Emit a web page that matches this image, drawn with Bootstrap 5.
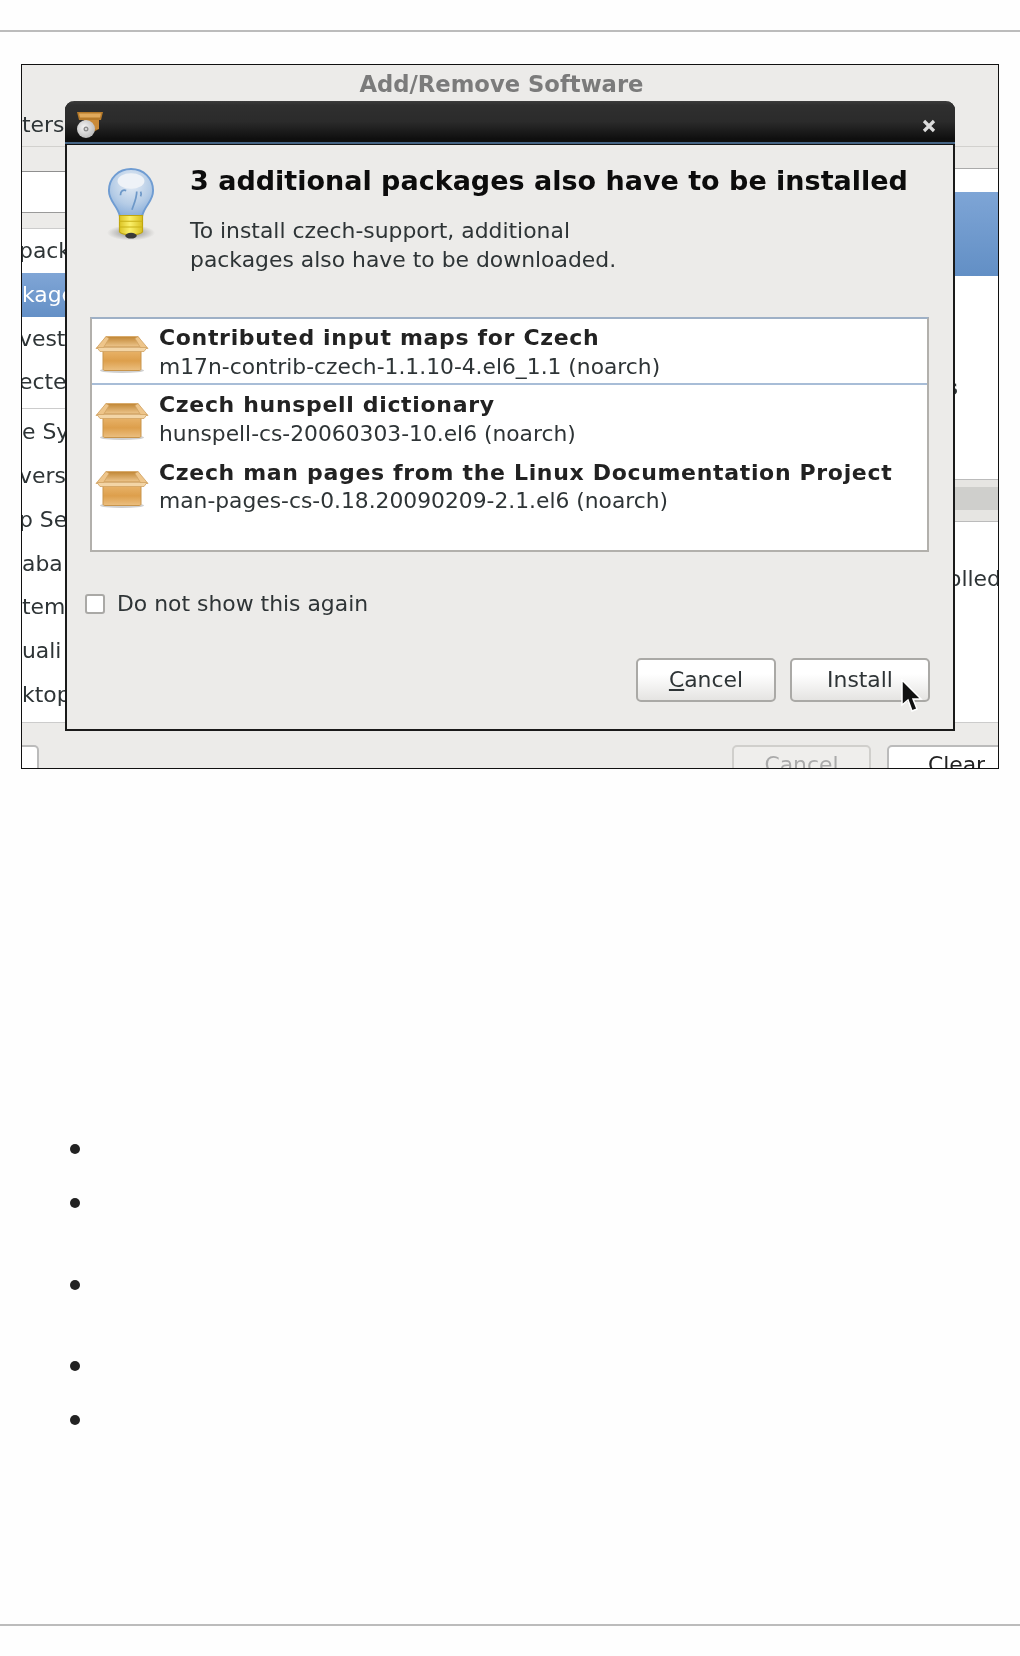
<!DOCTYPE html>
<html lang="en">
<head>
  <meta charset="UTF-8" />
  <meta name="viewport" content="width=device-width, initial-scale=1" />
  <title>Add/Remove Software</title>
  <link href="https://cdn.jsdelivr.net/npm/bootstrap@5.3.0/dist/css/bootstrap.min.css" rel="stylesheet" />
  <style>
    body { background: #fefefe; color: #2e3436; font-family: "DejaVu Sans", sans-serif; font-size: 21.9px; }
    .page-rule { height: 2px; background: #bcbcbc; opacity: 1; border: 0; margin: 0; }
    .top-rule { margin-top: 30px; }
    .bottom-rule { margin-top: 199px; }

    /* screenshot frame */
    .shot { margin: 32px 0 0 21px; width: 978px; height: 705px; border: 1px solid #111; background: #ecebe9; filter: blur(.5px); overflow: hidden; }
    .win-title { height: 39px; padding-right: 17px; font-size: 22.7px; font-weight: 700; color: #7b7b7b; }
    .win-tools { height: 43px; border-bottom: 1px solid #d2d1ce; }
    .win-main { height: 575px; }
    .side-col { width: 500px; flex: none; }
    .fill-col { width: 476px; flex: none; }
    .gap-a { height: 25px; border-bottom: 1px solid #8f8f8f; }
    .white-a { height: 40px; background: #fff; }
    .gap-b { height: 16px; border-top: 1px solid #9a9a9a; }
    .side-list { background: #fff; border-top: 1px solid #ccc; height: 494px; }
    .side-row { height: 43.8px; line-height: 43.8px; white-space: nowrap; }
    .side-row.on { background: linear-gradient(#80a6d6, #6490c6); color: #fff; }
    .side-row.cut { text-indent: -3px; }
    .side-sep { height: 5px; border-bottom: 1px solid #ccc; margin-bottom: 1px; }
    .pane-gap { height: 22px; border-bottom: 1px solid #aaa; }
    .pane-white { height: 23px; background: #fff; }
    .pane-blue { height: 84px; background: linear-gradient(#7ea5d6, #628fc5); }
    .pane-upper { height: 203px; background: #fff; padding-top: 99px; }
    .peek { padding-left: 426px; line-height: 26px; white-space: nowrap; }
    .peek-bold { padding-left: 423px; font-weight: 700; }
    .pane-bar { height: 43px; padding: 7px 0 11px; background: #e6e5e2; border-top: 1px solid #bbb; border-bottom: 1px solid #bbb; }
    .pane-fill { height: 100%; background: #cfcfcc; }
    .pane-lower { height: 200px; background: #fff; padding-top: 44px; }
    .win-foot { height: 46px; border-top: 1px solid #ccc; padding-top: 22px; }
    .foot-btn { flex: none; height: 40px; border: 2px solid #bbb; border-radius: 5px; background: #fff; line-height: 36px; text-align: center; }
    .foot-stub { width: 17px; border-left: 0; border-radius: 0 5px 0 0; }
    .foot-off { width: 139px; margin-left: 693px; color: #aaa; background: #efeeec; border-color: #d0cfcc; }
    .foot-clear { width: 139px; margin-left: 16px; color: #222; }

    /* dialog over the window */
    .dlg { position: absolute; left: 43px; top: 36px; width: 890px; height: 630px; background: #ecebe9; border: 2px solid #1a1a1a; border-top: 0; border-radius: 9px 9px 0 0; }
    .dlg-bar { height: 43px; margin: 0 -2px; padding: 10px 19px 0 11px; border-radius: 9px 9px 0 0; background: linear-gradient(#3c3c3c 0, #2f2f2f 10%, #2b2b2b 50%, #0f0f0f 92%); border-bottom: 2px solid #466484; box-shadow: 0 1px 0 #111; }
    .dlg-top { height: 173px; padding: 19px 0 0 40px; }
    .bulb { width: 48px; height: 74px; margin: 4px 35px 0 0; flex: none; }
    .dlg-head { font-size: 27px; font-weight: 700; color: #0c0c0c; line-height: 36px; margin-bottom: 17px; white-space: nowrap; }
    .dlg-copy { line-height: 29px; margin: 0; }
    .pkg-list { margin-left: 23px; width: 839px; height: 235px; background: #fff; border: 2px solid #b2b0ac; border-top-color: #9eb0c6; }
    .pkg-row { height: 67.5px; padding: 6px 0 0 3px; }
    .pkg-row.first { height: 66px; padding-top: 5px; border-bottom: 2px solid #a8bdd7; }
    .pkg-icon { width: 54px; height: 38px; margin: 11px 10px 0 0; flex: none; }
    .pkg-name { font-size: 22px; font-weight: 700; letter-spacing: .67px; line-height: 28.5px; color: #222; white-space: nowrap; }
    .pkg-file { font-size: 21.8px; line-height: 28.5px; white-space: nowrap; }
    .dont-show { margin: 39px 0 0 18px; padding: 0; min-height: 0; }
    .dont-show .form-check-input { float: none; margin: 0 12px 0 0; width: 20px; height: 20px; border: 2px solid #aaa9a6; border-radius: 3px; }
    .dont-show .form-check-label { line-height: 26px; }
    .dlg-btns { margin-top: 41px; padding-right: 23px; column-gap: 14px; }
    .gtk-btn { width: 140px; height: 44px; padding: 0; font-size: 21.9px; line-height: 38px; color: #2e3436; border: 2px solid #aaa9a6; border-radius: 5px; background: linear-gradient(#fff 35%, #e5e4e2); }
    .mouse { position: absolute; left: 833px; top: 578px; width: 24px; height: 34px; }

    .lower-list { list-style: none; margin: 375px 0 0 70px; padding: 0; }
    .lower-list li { width: 10px; height: 10px; border-radius: 50%; background: #222; }
    .lower-list li:nth-child(2), .lower-list li:nth-child(5) { margin-top: 44px; }
    .lower-list li:nth-child(3) { margin-top: 72px; }
    .lower-list li:nth-child(4) { margin-top: 71px; }
  </style>
</head>
<body>
  <hr class="page-rule top-rule" />

  <div class="shot position-relative d-flex flex-column">
    <div class="win-title d-flex align-items-center justify-content-center">Add/Remove Software</div>
    <div class="win-tools d-flex align-items-center">ters</div>

    <div class="win-main d-flex">
      <div class="side-col">
        <div class="gap-a"></div>
        <div class="white-a"></div>
        <div class="gap-b"></div>
        <div class="side-list">
          <div class="side-row cut">pack</div>
          <div class="side-row on">kage</div>
          <div class="side-row cut">vest</div>
          <div class="side-row cut">ecte</div>
          <div class="side-sep"></div>
          <div class="side-row">e Sy</div>
          <div class="side-row cut">vers</div>
          <div class="side-row cut">p Se</div>
          <div class="side-row">aba</div>
          <div class="side-row">tem</div>
          <div class="side-row">uali</div>
          <div class="side-row">ktop</div>
        </div>
      </div>
      <div class="fill-col">
        <div class="pane-gap"></div>
        <div class="pane-white"></div>
        <div class="pane-blue"></div>
        <div class="pane-upper"><div class="peek peek-bold">s</div></div>
        <div class="pane-bar"><div class="pane-fill"></div></div>
        <div class="pane-lower"><div class="peek">olled</div></div>
      </div>
    </div>

    <div class="win-foot d-flex">
      <div class="foot-btn foot-stub"></div>
      <div class="foot-btn foot-off">Cancel</div>
      <div class="foot-btn foot-clear">Clear</div>
    </div>

    <!-- the dialog sits on top of the main window -->
    <div class="dlg d-flex flex-column">
      <div class="dlg-bar d-flex justify-content-between">
        <svg width="28" height="28" viewBox="0 0 28 28">
          <defs>
            <radialGradient id="cd" cx=".4" cy=".4" r=".7"><stop offset="0" stop-color="#f4f4f4"/><stop offset="1" stop-color="#b5b5b5"/></radialGradient>
          </defs>
          <path d="M1 1h26l-2 8h-2v9l-8 4H8V9H3z" fill="#b67a2a"/>
          <path d="M3 2.500h22l-1 4H4z" fill="#e0a95c"/>
          <path d="M8 9h15v9H8z" fill="#c98a38"/>
          <circle cx="10" cy="18" r="9" fill="url(#cd)"/>
          <circle cx="10" cy="18" r="2.500" fill="#8d8d8d"/>
          <circle cx="10" cy="18" r="1" fill="#eee"/>
        </svg>
        <svg class="mt-2" width="14" height="14" viewBox="0 0 14 14"><path d="M2 2l10 10M12 2L2 12" stroke="#dcdcdc" stroke-width="3.200"/></svg>
      </div>

      <div class="dlg-top d-flex">
        <svg class="bulb" viewBox="0 0 50 76">
          <defs>
            <radialGradient id="glass" cx=".5" cy=".3" r=".75"><stop offset="0" stop-color="#e6edf5"/><stop offset=".6" stop-color="#b5cce6"/><stop offset="1" stop-color="#82a9d8"/></radialGradient>
            <linearGradient id="brass" x1="0" x2="1" y1="0" y2="0"><stop offset="0" stop-color="#dcc425"/><stop offset=".45" stop-color="#fbf06a"/><stop offset="1" stop-color="#d8c020"/></linearGradient>
            <radialGradient id="drop"><stop offset="0" stop-color="#8a8a88"/><stop offset="1" stop-color="#ecebe9"/></radialGradient>
          </defs>
          <ellipse cx="25" cy="68" rx="25" ry="8" fill="url(#drop)"/>
          <path d="M25 1.500C12 1.500 2 11 2 24c0 12 9 15 11.500 27h23C39 39 48 36 48 24 48 11 38 1.500 25 1.500z" fill="url(#glass)" stroke="#6f9cd2" stroke-width="2"/>
          <ellipse cx="25" cy="14" rx="14" ry="8" fill="#eef2f7"/>
          <path d="M14 29c0-5 3-6 6-5M35 25c1 2 1 3 0 5M31 25c0 7-3 13-5 19" fill="none" stroke="#6d98c8" stroke-width="1.800"/>
          <path d="M13 50h24v17c-3 4-21 4-24 0z" fill="url(#brass)" stroke="#c0a60f" stroke-width="1.200"/>
          <path d="M13 56h24M13 62h24" stroke="#c9b118" stroke-width="1.200"/>
          <ellipse cx="25" cy="71" rx="6" ry="3" fill="#3a3a38"/>
        </svg>
        <div>
          <div class="dlg-head">3 additional packages also have to be installed</div>
          <p class="dlg-copy">To install czech-support, additional<br />packages also have to be downloaded.</p>
        </div>
      </div>

      <div class="pkg-list">
        <svg width="0" height="0" class="position-absolute">
          <defs>
            <linearGradient id="boxFront" x1="0" x2="0" y1="0" y2="1"><stop offset="0" stop-color="#eab66e"/><stop offset=".55" stop-color="#dd9f4c"/><stop offset="1" stop-color="#ebbf80"/></linearGradient>
            <linearGradient id="boxIn" x1="0" x2="0" y1="0" y2="1"><stop offset="0" stop-color="#c08533"/><stop offset="1" stop-color="#ecc48a"/></linearGradient>
            <symbol id="boxIcon" viewBox="0 0 54 38">
              <ellipse cx="27" cy="35.500" rx="22" ry="2.500" fill="#cfcfcf"/>
              <path d="M11 1.500h32l6 10H5z" fill="url(#boxIn)" stroke="#d8ab6c"/>
              <path d="M8 14h38v20c0 1-1 1.500-2 1.500H10c-1 0-2-.5-2-1.500z" fill="url(#boxFront)" stroke="#c8954c"/>
              <path d="M1 13.500L11 1.500l3 2-6 10zM53 13.500L43 1.500l-3 2 6 10z" fill="#eec58a" stroke="#d1a262" stroke-width=".8"/>
              <path d="M2 12.500h50l-3 4H5z" fill="#f3d5a6" stroke="#d1a262" stroke-width=".8"/>
            </symbol>
          </defs>
        </svg>
        <div class="pkg-row first d-flex">
          <svg class="pkg-icon"><use href="#boxIcon"/></svg>
          <div>
            <div class="pkg-name">Contributed input maps for Czech</div>
            <div class="pkg-file">m17n-contrib-czech-1.1.10-4.el6_1.1 (noarch)</div>
          </div>
        </div>
        <div class="pkg-row d-flex">
          <svg class="pkg-icon"><use href="#boxIcon"/></svg>
          <div>
            <div class="pkg-name">Czech hunspell dictionary</div>
            <div class="pkg-file">hunspell-cs-20060303-10.el6 (noarch)</div>
          </div>
        </div>
        <div class="pkg-row d-flex">
          <svg class="pkg-icon"><use href="#boxIcon"/></svg>
          <div>
            <div class="pkg-name">Czech man pages from the Linux Documentation Project</div>
            <div class="pkg-file">man-pages-cs-0.18.20090209-2.1.el6 (noarch)</div>
          </div>
        </div>
      </div>

      <div class="form-check dont-show d-flex align-items-center">
        <input class="form-check-input" type="checkbox" id="noShow" />
        <label class="form-check-label" for="noShow">Do not show this again</label>
      </div>

      <div class="dlg-btns d-flex justify-content-end">
        <button type="button" class="btn gtk-btn"><u>C</u>ancel</button>
        <button type="button" class="btn gtk-btn">Install</button>
      </div>

      <svg class="mouse" viewBox="0 0 24 34">
        <path d="M2 1v25l6-5 4 11 5-2-4-10h8z" fill="#111" stroke="#fff" stroke-width="1.500"/>
      </svg>
    </div>
  </div>

  <ul class="lower-list">
    <li></li>
    <li></li>
    <li></li>
    <li></li>
    <li></li>
  </ul>

  <hr class="page-rule bottom-rule" />
</body>
</html>
